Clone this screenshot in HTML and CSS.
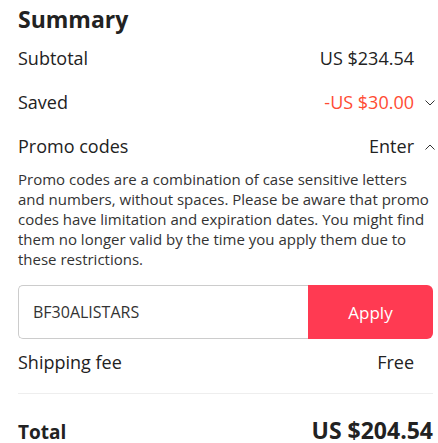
FILE: index.html
```html
<!DOCTYPE html>
<html lang="en">
<head>
<meta charset="utf-8">
<link rel="stylesheet" href="styles.css">
</head>
<body>
<section class="summary">
  <h2 class="title">Summary</h2>
  <div class="row">
    <span class="label">Subtotal</span>
    <span class="value">US $234.54</span>
  </div>
  <div class="row">
    <span class="label">Saved</span>
    <span class="value saved">-US $30.00<svg class="chev" viewBox="0 0 10 6" width="10" height="6"><path d="M0.5 0.5 L5 5 L9.5 0.5" fill="none" stroke="#333" stroke-width="1"/></svg></span>
  </div>
  <div class="row">
    <span class="label">Promo codes</span>
    <span class="value">Enter<svg class="chev" viewBox="0 0 10 6" width="10" height="6"><path d="M0.5 5.5 L5 1 L9.5 5.5" fill="none" stroke="#333" stroke-width="1"/></svg></span>
  </div>
  <p class="note">Promo codes are a combination of case sensitive letters and numbers, without spaces. Please be aware that promo codes have limitation and expiration dates. You might find them no longer valid by the time you apply them due to these restrictions.</p>
  <div class="promo">
    <div class="code">BF30ALISTARS</div>
    <button class="apply">Apply</button>
  </div>
  <div class="row">
    <span class="label">Shipping fee</span>
    <span class="value">Free</span>
  </div>
  <hr class="divider">
  <div class="total">
    <span class="total-label">Total</span>
    <span class="total-value">US $204.54</span>
  </div>
</section>
</body>
</html>
```

FILE: styles.css
```css
html, body {
  margin: 0;
  padding: 0;
  background: #fff;
}
body {
  font-family: "Open Sans", "Liberation Sans", sans-serif;
  color: #222;
}
.summary {
  padding: 0 5px 0 18px;
}
.title {
  margin: 0;
  padding-top: 3px;
  font-size: 23px;
  line-height: 32px;
  font-weight: 700;
}
.row {
  display: flex;
  justify-content: space-between;
  align-items: baseline;
  padding: 11px 19px 9px 0;
  font-size: 18px;
  line-height: 24px;
}
.value {
  position: relative;
}
.saved {
  color: #ff4b33;
}
.chev {
  position: absolute;
  left: calc(100% + 11px);
  top: 10px;
}
.note {
  margin: 2px 0 0;
  font-size: 15px;
  line-height: 20px;
  color: #333;
}
.promo {
  display: flex;
  margin-top: 16px;
  height: 54px;
}
.code {
  flex: 1;
  display: flex;
  align-items: center;
  padding-left: 14px;
  border: 1px solid #ccc;
  border-right: none;
  border-radius: 5px 0 0 5px;
  font-size: 16px;
  color: #333;
}
.apply {
  width: 125px;
  border: none;
  border-radius: 0 6px 6px 0;
  background: #ff3a52;
  color: #fff;
  font-family: inherit;
  font-size: 17px;
  padding: 0;
}
.divider {
  margin: 10px 0 0;
  border: none;
  border-top: 1px solid #eee;
}
.total {
  display: flex;
  justify-content: space-between;
  align-items: baseline;
  padding-top: 23px;
  font-weight: 700;
  line-height: 26px;
}
.total-label {
  font-size: 19px;
}
.total-value {
  font-size: 23px;
}
```
